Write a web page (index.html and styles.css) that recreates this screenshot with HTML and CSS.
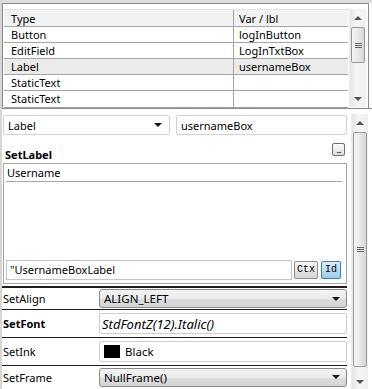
FILE: index.html
```html
<!DOCTYPE html>
<html lang="en">

<head>
    <meta charset="UTF-8">
    <title>Control Properties</title>
    <link rel="stylesheet" href="styles.css">
</head>

<body>

    <div class="app">
        <div class="top-strip"></div>

        <div class="grid-frame">
            <div class="grid-table">
                <div class="grid-row grid-head">
                    <div class="cell type">Type</div>
                    <div class="cell var">Var / lbl</div>
                </div>
                <div class="grid-row">
                    <div class="cell type">Button</div>
                    <div class="cell var">logInButton</div>
                </div>
                <div class="grid-row">
                    <div class="cell type">EditField</div>
                    <div class="cell var">LogInTxtBox</div>
                </div>
                <div class="grid-row selected">
                    <div class="cell type">Label</div>
                    <div class="cell var">usernameBox</div>
                </div>
                <div class="grid-row">
                    <div class="cell type">StaticText</div>
                    <div class="cell var"></div>
                </div>
                <div class="grid-row">
                    <div class="cell type">StaticText</div>
                    <div class="cell var"></div>
                </div>
            </div>
            <div class="vscroll grid-scroll">
                <div class="arrow"><span class="tri up"></span></div>
                <div class="thumb"><span class="grip"></span></div>
                <div class="track"></div>
                <div class="arrow"><span class="tri down"></span></div>
            </div>
        </div>

        <div class="props">
            <div class="props-body">
                <div class="selector-row">
                    <div class="combo">Label <span class="caret"></span></div>
                    <div class="field">usernameBox</div>
                </div>

                <div class="label-section">
                    <div class="section-head">
                        <span class="section-title">SetLabel</span>
                        <span class="dots-btn">...</span>
                    </div>
                    <div class="label-box">
                        <div class="label-text">Username</div>
                        <div class="label-foot">
                            <div class="id-field">"UsernameBoxLabel</div>
                            <span class="mini-btn">Ctx</span>
                            <span class="mini-btn active">Id</span>
                        </div>
                    </div>
                </div>

                <div class="prop-row first">
                    <div class="prop-name">SetAlign</div>
                    <div class="select">ALIGN_LEFT <span class="caret"></span></div>
                </div>
                <div class="prop-row tall">
                    <div class="prop-name bold">SetFont</div>
                    <div class="input italic">StdFontZ(12).Italic()</div>
                </div>
                <div class="prop-row tall">
                    <div class="prop-name">SetInk</div>
                    <div class="input"><span class="swatch"></span>Black</div>
                </div>
                <div class="prop-row">
                    <div class="prop-name">SetFrame</div>
                    <div class="select">NullFrame() <span class="caret"></span></div>
                </div>
            </div>

            <div class="vscroll props-scroll">
                <div class="arrow"><span class="tri up"></span></div>
                <div class="thumb"><span class="grip"></span></div>
                <div class="track"></div>
                <div class="arrow"><span class="tri down"></span></div>
            </div>
        </div>
    </div>

</body>

</html>
```

FILE: styles.css
```css
* {
    margin: 0;
    padding: 0;
    box-sizing: border-box;
}

body {
    font-family: 'Noto Sans', sans-serif;
    font-size: 11px;
    color: #000;
    background: #fff;
}

.app {
    width: 372px;
    height: 389px;
    overflow: hidden;
    border-left: 2px solid #d6d6d6;
    background: #fff;
}

.top-strip {
    height: 3px;
    background: #dcdcdc;
}

/* control list */

.grid-frame {
    display: flex;
    height: 105px;
    margin-right: 3px;
    padding: 5px 1px 0 1px;
    border: 1px solid #8c8c8c;
    border-bottom: none;
}

.grid-table {
    width: 344px;
    border-bottom: 1px solid #a0a0a0;
}

.grid-row {
    display: flex;
    height: 16px;
    border-bottom: 1px solid #a5a5a5;
    line-height: 15px;
}

.grid-head {
    height: 18px;
    line-height: 17px;
    background: #f2f2f2;
    border-top: 1px solid #e2e2e2;
}

.grid-row:last-child {
    border-bottom: none;
}

.grid-row.selected {
    background: #ebebeb;
}

.cell {
    white-space: nowrap;
}

.cell.type {
    width: 230px;
    padding-left: 7px;
    border-right: 1px solid #a5a5a5;
}

.cell.var {
    flex: 1;
    padding-left: 5px;
}

/* scrollbars */

.vscroll {
    display: flex;
    flex-direction: column;
    width: 17px;
    background: linear-gradient(to right, #e6e6e6, #f5f5f5 40%, #f0f0f0);
    border-left: 1px solid #ededed;
}

.grid-scroll {
    margin-left: 1px;
    height: 98px;
}

.arrow {
    height: 17px;
    display: flex;
    align-items: center;
    justify-content: center;
}

.tri {
    width: 0;
    height: 0;
    border-left: 4px solid transparent;
    border-right: 4px solid transparent;
}

.tri.up {
    border-bottom: 4px solid #555;
}

.tri.down {
    border-top: 4px solid #555;
}

.thumb {
    margin: 1px 1px 0 1px;
    border: 1px solid #9a9a9a;
    border-radius: 2px;
    background: linear-gradient(to right, #f4f4f4, #e8e8e8 50%, #d6d6d6);
    display: flex;
    align-items: center;
    justify-content: center;
}

.grid-scroll .thumb {
    height: 36px;
}

.grip {
    width: 7px;
    height: 5px;
    border-top: 1px solid #666;
    border-bottom: 1px solid #666;
    position: relative;
}

.grip::after {
    content: '';
    position: absolute;
    left: 0;
    right: 0;
    top: 1px;
    border-top: 1px solid #666;
}

.track {
    flex: 1;
}

/* property panel */

.props {
    display: flex;
    height: 281px;
    border-top: 1px solid #8c8c8c;
}

.props-body {
    width: 347px;
    border-left: 1px solid #8c8c8c;
    margin-left: -2px;
    padding-left: 1px;
}

.props-scroll {
    margin-top: 5px;
    margin-left: 4px;
    height: 276px;
}

.props-scroll .thumb {
    height: 235px;
}

.selector-row {
    display: flex;
    gap: 6px;
    margin-top: 6px;
    height: 20px;
}

.combo,
.field {
    display: flex;
    align-items: center;
    height: 20px;
    padding-left: 4px;
    border: 1px solid #d2d2d2;
    border-radius: 2px;
    background: #fff;
}

.combo {
    width: 167px;
    margin-left: 1px;
    justify-content: space-between;
    padding-right: 7px;
}

.field {
    flex: 1;
}

.caret {
    width: 0;
    height: 0;
    border-left: 4px solid transparent;
    border-right: 4px solid transparent;
    border-top: 4px solid #111;
}

.label-section {
    padding-left: 1px;
}

.section-head {
    display: flex;
    justify-content: space-between;
    height: 21px;
    margin-top: 7px;
    padding-right: 2px;
}

.section-title {
    font-weight: bold;
    padding-left: 2px;
    align-self: flex-end;
    line-height: 17px;
}

.dots-btn {
    display: flex;
    align-items: flex-end;
    justify-content: center;
    width: 13px;
    height: 13px;
    margin-top: 1px;
    padding-bottom: 1px;
    border: 1px solid #6e6e6e;
    border-radius: 2px;
    background: linear-gradient(#fdfdfd, #dcdcdc);
    font-size: 9px;
    line-height: 9px;
    letter-spacing: -1px;
    overflow: hidden;
}

.label-box {
    display: flex;
    flex-direction: column;
    height: 121px;
    border: 1px solid #a6a6a6;
    padding: 0 2px 3px 2px;
}

.label-text {
    height: 18px;
    line-height: 18px;
    padding-left: 1px;
    border-bottom: 1px solid #a6a6a6;
    margin-right: 2px;
}

.label-foot {
    display: flex;
    align-items: center;
    gap: 2px;
    margin-top: auto;
    height: 20px;
}

.id-field {
    flex: 1;
    height: 20px;
    line-height: 18px;
    padding-left: 3px;
    border: 1px solid #c4c4c4;
}

.mini-btn {
    height: 18px;
    padding: 0 2px;
    border: 1px solid #8c8c8c;
    border-radius: 2px;
    background: linear-gradient(#f7f7f7, #d6d6d6);
    font-family: 'Liberation Mono', monospace;
    font-size: 10px;
    line-height: 16px;
}

.mini-btn.active {
    width: 20px;
    margin-left: 1px;
    margin-right: 3px;
    text-align: center;
    border-color: #3c7fb1;
    background: linear-gradient(#d8eefc, #9ccbed);
}

.prop-row {
    display: flex;
    align-items: center;
    height: 23px;
    border-top: 1px solid #1e1e1e;
    margin-left: -1px;
}

.prop-row.first {
    margin-top: 2px;
    border-top-width: 2px;
}

.prop-row.tall {
    height: 28px;
}

.prop-name {
    width: 98px;
    padding-left: 2px;
}

.prop-name.bold {
    font-weight: bold;
}

.select,
.input {
    display: flex;
    align-items: center;
    width: 248px;
    height: 19px;
    padding-left: 4px;
}

.select {
    justify-content: space-between;
    padding-right: 6px;
    border: 1px solid #8a8a8a;
    border-radius: 3px;
    background: linear-gradient(#f3f3f3, #ebebeb 50%, #dddddd 51%, #d4d4d4);
    font-size: 11.5px;
}

.input {
    height: 21px;
    border: 1px solid #cdcdcd;
    border-radius: 2px;
    background: #fff;
    font-size: 11.5px;
}

.input.italic {
    font-style: italic;
    font-size: 13px;
    padding-left: 2px;
}

.swatch {
    width: 16px;
    height: 13px;
    background: #000;
    margin-right: 5px;
}
```
